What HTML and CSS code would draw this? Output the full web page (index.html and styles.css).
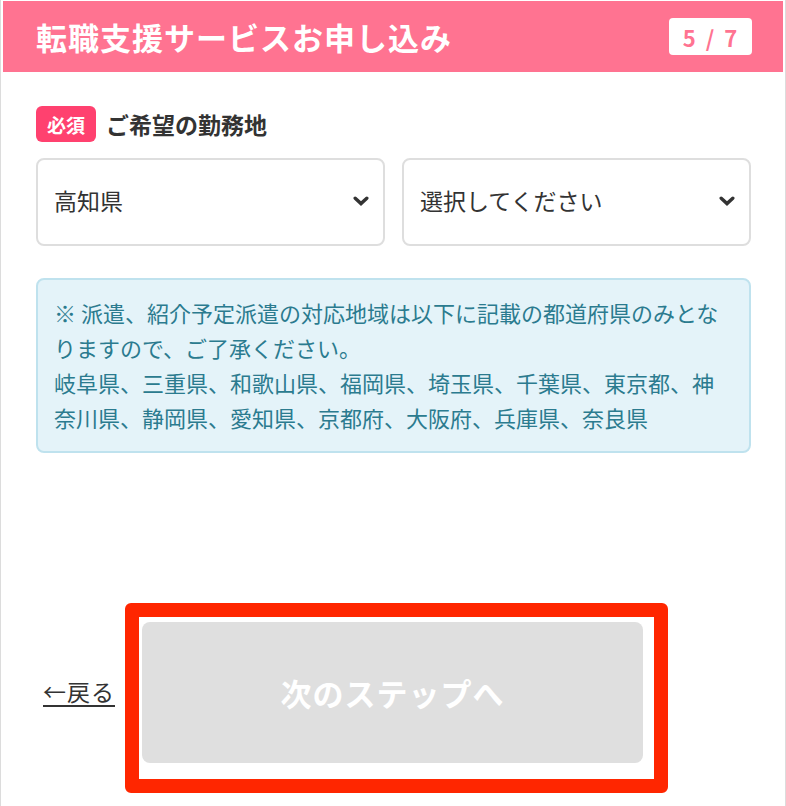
FILE: index.html
```html
<!DOCTYPE html>
<html lang="ja">
<head>
<meta charset="utf-8">
<title>転職支援サービスお申し込み</title>
<link rel="stylesheet" href="styles.css">
</head>
<body>
<div class="page">
  <header class="header">
    <h1 class="title">転職支援サービスお申し込み</h1>
    <div class="step">5 / 7</div>
  </header>
  <main class="body">
    <div class="label-row">
      <span class="required">必須</span>
      <span class="label">ご希望の勤務地</span>
    </div>
    <div class="selects">
      <div class="select">
        <span>高知県</span>
        <svg class="chev" width="16" height="10" viewBox="0 0 16 10"><path d="M2.2 2.2 L8 7.6 L13.8 2.2" fill="none" stroke="#333" stroke-width="3.4" stroke-linecap="round" stroke-linejoin="miter"/></svg>
      </div>
      <div class="select">
        <span>選択してください</span>
        <svg class="chev" width="16" height="10" viewBox="0 0 16 10"><path d="M2.2 2.2 L8 7.6 L13.8 2.2" fill="none" stroke="#333" stroke-width="3.4" stroke-linecap="round" stroke-linejoin="miter"/></svg>
      </div>
    </div>
    <div class="notice">
      ※ 派遣、紹介予定派遣の対応地域は以下に記載の都道府県のみとな<br>りますので、ご了承ください。<br>岐阜県、三重県、和歌山県、福岡県、埼玉県、千葉県、東京都、神<br>奈川県、静岡県、愛知県、京都府、大阪府、兵庫県、奈良県
    </div>
    <div class="actions">
      <a class="back" href="#">←戻る</a>
      <div class="frame">
        <button class="next" type="button">次のステップへ</button>
      </div>
    </div>
  </main>
</div>
</body>
</html>
```
FILE: styles.css
```css
* { box-sizing: border-box; }
html, body {
  margin: 0;
  padding: 0;
  background: #fff;
}
body {
  font-family: "Noto Sans CJK JP", "Noto Sans", sans-serif;
  color: #333;
}
.page {
  width: 786px;
  min-height: 806px;
  border-left: 1px solid #dcdcdc;
  border-right: 1px solid #dcdcdc;
  padding: 1px 2px 0 2px;
}
.header {
  height: 71px;
  background: #ff7391;
  display: flex;
  align-items: center;
  justify-content: space-between;
  padding: 0 31px 0 33px;
}
.title {
  margin: 0;
  color: #fff;
  font-size: 31px;
  font-weight: 700;
  letter-spacing: 1px;
  line-height: 1;
}
.step {
  width: 83px;
  height: 37px;
  background: #fff;
  border-radius: 4px;
  color: #ff7391;
  font-size: 22px;
  font-weight: 700;
  display: flex;
  align-items: center;
  justify-content: center;
  line-height: 1;
  word-spacing: 3px;
  letter-spacing: 1px;
}
.body {
  padding: 0 32px 0 33px;
}
.label-row {
  margin-top: 34px;
  display: flex;
  align-items: center;
  gap: 10px;
}
.required {
  width: 60px;
  height: 36px;
  border-radius: 6px;
  background: #ff416f;
  color: #fff;
  font-size: 19px;
  font-weight: 700;
  display: flex;
  align-items: center;
  justify-content: center;
  line-height: 1;
}
.label {
  font-size: 23px;
  font-weight: 700;
  color: #333;
  line-height: 1;
}
.selects {
  margin-top: 16px;
  display: grid;
  grid-template-columns: 1fr 1fr;
  gap: 17px;
}
.select {
  height: 88px;
  border: 2px solid #dedede;
  border-radius: 8px;
  display: flex;
  align-items: center;
  justify-content: space-between;
  padding: 0 14px 4px 16px;
  font-size: 23px;
  color: #333;
}
.chev { display: block; margin-top: 2px; }
.notice {
  margin-top: 32px;
  background: #e4f3f9;
  border: 2px solid #bfe2ee;
  border-radius: 8px;
  padding: 15px 16px 16px 16px;
  font-size: 22px;
  line-height: 35px;
  color: #2b7b8f;
  white-space: nowrap;
}
.actions {
  margin-top: 150px;
  display: flex;
  align-items: center;
  gap: 10px;
  padding-left: 7px;
}
.back {
  color: #333;
  font-size: 23px;
  letter-spacing: 1px;
  text-decoration: underline;
  text-underline-offset: 4px;
  text-decoration-thickness: 2px;
  margin-bottom: 14px;
}
.frame {
  border: 14px solid #ff2600;
  border-radius: 6px;
  padding: 5px 11px 16px 3px;
}
.next {
  display: flex;
  align-items: center;
  justify-content: center;
  width: 501px;
  height: 141px;
  border: 0;
  border-radius: 8px;
  background: #dfdfdf;
  color: #fff;
  font-family: "Noto Sans CJK JP", "Noto Sans", sans-serif;
  font-size: 31px;
  font-weight: 700;
  letter-spacing: 1px;
  padding: 0;
}
```
